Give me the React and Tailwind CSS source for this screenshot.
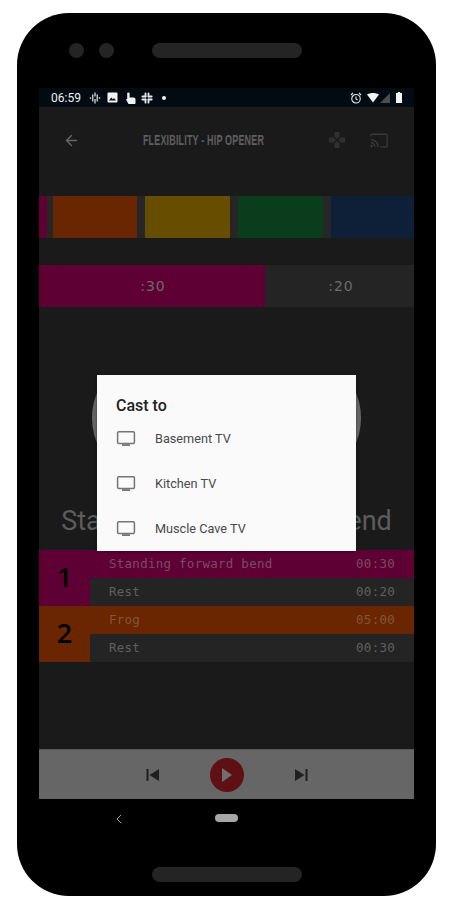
import { ArrowLeft } from "lucide-react";

const StatusIcons = () => (
  <div className="flex items-center">
    <svg width="12" height="12" viewBox="0 0 12 12" fill="#e8eaed" className="ml-[8px]">
      <rect x="5.4" y="0.5" width="1.2" height="4" />
      <rect x="5.4" y="7" width="1.2" height="4.500" />
      <rect x="3.2" y="2.500" width="1.2" height="7" />
      <rect x="7.6" y="2.500" width="1.2" height="7" />
      <rect x="0.8" y="5.300" width="1.400" height="1.400" />
      <rect x="9.8" y="5.300" width="1.400" height="1.400" />
    </svg>
    <svg width="11" height="11" viewBox="0 0 11 11" className="ml-[6px]">
      <rect x="0.5" y="0.5" width="10" height="10" rx="1" fill="#f1f3f4" />
      <path d="M2 8.500 4.200 5.500 5.800 7.300 7 6 9 8.500z" fill="#06101a" />
    </svg>
    <svg width="11" height="12" viewBox="0 0 11 12" fill="#f1f3f4" className="ml-[7px]">
      <rect x="2.200" y="0.500" width="2.400" height="7" rx="1.100" />
      <path d="M1 7.500 4.500 5.500h4a2 2 0 0 1 2 2V11a1 1 0 0 1-1 1H3.500z" />
    </svg>
    <svg width="12" height="12" viewBox="0 0 12 12" fill="#e8eaed" className="ml-[5px]">
      <rect x="0.500" y="3.600" width="5" height="1.800" rx="0.900" />
      <rect x="6.600" y="0.500" width="1.800" height="5" rx="0.900" />
      <rect x="6.600" y="3.600" width="5" height="1.800" rx="0.900" />
      <rect x="0.500" y="6.600" width="5" height="1.800" rx="0.900" />
      <rect x="3.600" y="6.600" width="1.800" height="5" rx="0.900" />
      <rect x="6.600" y="6.600" width="5" height="1.800" rx="0.900" />
      <rect x="3.600" y="0.500" width="1.800" height="5" rx="0.900" />
      <rect x="6.600" y="6.600" width="1.800" height="5" rx="0.900" />
    </svg>
    <span className="ml-[9px] h-[4px] w-[4px] rounded-full bg-[#f1f3f4]" />
  </div>
);

const TvIcon = () => (
  <svg width="20" height="18" viewBox="0 0 20 18" fill="none" className="shrink-0">
    <rect x="1.600" y="1.800" width="16.800" height="11.700" rx="1.200" stroke="#757575" strokeWidth="1.500" />
    <rect x="6" y="14.200" width="8" height="1.800" fill="#757575" />
  </svg>
);

const CastRow = ({ name }) => (
  <div className="flex h-[45px] items-center pl-[19px]">
    <TvIcon />
    <span className="ml-[19px] font-['Roboto',sans-serif] text-[12.7px] text-[#484848]">{name}</span>
  </div>
);

const WorkoutRow = ({ name, time, bg, color }) => (
  <div className={`flex h-[28px] items-center justify-between pl-[19px] pr-[19px] font-['DejaVu_Sans_Mono',monospace] text-[12.5px] tracking-[0.26px] ${bg} ${color}`}>
    <span>{name}</span>
    <span>{time}</span>
  </div>
);

const SetGroup = ({ num, bg, children }) => (
  <div className={`flex h-[56px] ${bg}`}>
    <div className="flex w-[51px] items-center justify-center pb-[1px] font-['Open_Sans',sans-serif] text-[27px] font-semibold text-black">{num}</div>
    <div className="flex-1">{children}</div>
  </div>
);

export default function App() {
  return (
    <div className="h-[914px] w-[453px] overflow-hidden bg-white pl-[17px] pt-[13px]">
      <div className="flex h-[883px] w-[419px] flex-col rounded-[52px] bg-black">
        {/* top bezel */}
        <div className="flex h-[75px] shrink-0 items-start pl-[52px] pt-[30px]">
          <span className="h-[15px] w-[15px] rounded-full bg-[#242424]" />
          <span className="ml-[15px] h-[15px] w-[15px] rounded-full bg-[#242424]" />
          <span className="ml-[38px] h-[15px] w-[150px] rounded-full bg-[#242424]" />
        </div>

        {/* screen */}
        <div className="relative mx-[22px] flex h-[711px] w-[375px] flex-col bg-[#1a1a1a]">
          <div className="flex h-[19px] shrink-0 items-center justify-between bg-[#020a12] pl-[12px] pr-[12px]">
            <div className="flex items-center">
              <span className="font-['Roboto',sans-serif] text-[12px] text-[#f1f3f4]">06:59</span>
              <StatusIcons />
            </div>
            <div className="flex items-center">
              <svg width="12" height="12" viewBox="0 0 24 24" fill="none" stroke="#e8eaed" strokeWidth="2.200">
                <circle cx="12" cy="13.500" r="8.500" />
                <path d="M12 9v5l3 2M2 6l4-4M22 6l-4-4" />
              </svg>
              <svg width="12" height="10" viewBox="0 0 12 10" className="ml-[5px]">
                <path d="M0 1.500C3.500-.5 8.500-.5 12 1.500L6 9.500z" fill="#f1f3f4" />
              </svg>
              <svg width="10" height="10" viewBox="0 0 10 10" className="ml-[1px]">
                <path d="M10 0V10H0z" fill="#4a4d50" />
              </svg>
              <svg width="6" height="11" viewBox="0 0 6 11" className="ml-[6px]">
                <path d="M1.800 0h2.400v1H6v10H0V1h1.800z" fill="#f1f3f4" />
              </svg>
            </div>
          </div>

          {/* app bar */}
          <div className="flex h-[66px] shrink-0 items-center pl-[24px] pr-[26px]">
            <ArrowLeft size={17} color="#666666" strokeWidth={2} />
            <div className="flex-1 text-center font-['Liberation_Sans',sans-serif] text-[15.5px] font-bold tracking-[0.3px] whitespace-nowrap text-[#5f5f5f]">
              <span className="inline-block scale-x-[0.58]">FLEXIBILITY - HIP OPENER</span>
            </div>
            <svg width="18" height="18" viewBox="0 0 18 18" fill="#303030" className="mr-[24px]">
              <path d="M9 8 6.500 5.500V1h5v4.500zM10 9l2.500-2.500H17v5h-4.500zM9 10l2.500 2.500V17h-5v-4.500zM8 9 5.500 11.500H1v-5h4.500z" />
            </svg>
            <svg width="18" height="15" viewBox="0 0 20 16" fill="none" stroke="#383838" strokeWidth="1.500">
              <path d="M1 3.500V2a1 1 0 0 1 1-1h16a1 1 0 0 1 1 1v12a1 1 0 0 1-1 1h-7" />
              <path d="M1 7a8 8 0 0 1 8 8M1 10.500a4.500 4.500 0 0 1 4.500 4.500" />
              <circle cx="1.800" cy="14.200" r="0.700" fill="#383838" />
            </svg>
          </div>

          {/* exercise colour strip */}
          <div className="mt-[23px] flex h-[42px] shrink-0 overflow-hidden bg-[#262626]">
            <div className="w-[8.300px] shrink-0 bg-[#5f0034]" />
            <div className="ml-[6px] w-[84px] shrink-0 bg-[#692600]" />
            <div className="ml-[8px] w-[84.700px] shrink-0 bg-[#664d00]" />
            <div className="ml-[8px] w-[84.700px] shrink-0 bg-[#0a3d1c]" />
            <div className="ml-[8px] w-[84.700px] shrink-0 bg-[#0d2038]" />
          </div>

          {/* interval bar */}
          <div className="mt-[27px] flex h-[42px] shrink-0 font-['DejaVu_Sans',sans-serif] text-[14px] tracking-[1px] text-[#6b6b6b]">
            <div className="flex w-[226px] items-center justify-center bg-[#5f0034] pl-[2px]">:30</div>
            <div className="flex flex-1 items-center justify-center bg-[#242424] pl-[3px]">:20</div>
          </div>

          {/* timer and exercise name sit behind the dialog */}
          <div className="mt-[68px] flex h-[86px] shrink-0 justify-center">
            <div className="h-[86px] w-[269px] rounded-[27px/43px] bg-[#666666]" />
          </div>

          <div className="mt-[45px] h-[30px] shrink-0 text-center font-['Roboto',sans-serif] text-[27px] leading-[30px] whitespace-nowrap text-[#5c5c5c] [word-spacing:29px]">
            Standing forward bend
          </div>

          <div className="mt-[14px] shrink-0">
            <SetGroup num="1" bg="bg-[#5f0034]">
              <WorkoutRow name="Standing forward bend" time="00:30" bg="bg-[#5f0034]" color="text-[#7c4a66]" />
              <WorkoutRow name="Rest" time="00:20" bg="bg-[#242424]" color="text-[#606060]" />
            </SetGroup>
            <SetGroup num="2" bg="bg-[#692600]">
              <WorkoutRow name="Frog" time="05:00" bg="bg-[#692600]" color="text-[#85553a]" />
              <WorkoutRow name="Rest" time="00:30" bg="bg-[#242424]" color="text-[#606060]" />
            </SetGroup>
          </div>

          {/* player controls */}
          <div className="mt-auto flex h-[50px] shrink-0 items-center justify-center border-t border-[#585858] bg-[#666666]">
            <svg width="14" height="14" viewBox="0 0 14 14" fill="#1f1f1f">
              <rect x="0.500" y="1" width="2" height="12" />
              <path d="M13 1v12L3.500 7z" />
            </svg>
            <div className="mx-[50px] flex h-[34px] w-[34px] items-center justify-center rounded-full bg-[#5e1014]">
              <svg width="12" height="14" viewBox="0 0 12 14" fill="#6f6f6f" className="ml-[1px]">
                <path d="M1 0 11 7 1 14z" />
              </svg>
            </div>
            <svg width="14" height="14" viewBox="0 0 14 14" fill="#1f1f1f">
              <rect x="11.500" y="1" width="2" height="12" />
              <path d="M1 1v12l9.500-6z" />
            </svg>
          </div>

          {/* cast dialog */}
          <div className="absolute left-[58px] top-[287px] h-[176px] w-[259px] bg-[#fafafa] shadow-[0_1px_3px_rgba(0,0,0,0.4)]">
            <div className="pl-[19px] pt-[21px] font-['Roboto',sans-serif] text-[16px] leading-[20px] font-medium text-[#212121]">Cast to</div>
            <div>
              <CastRow name="Basement TV" />
              <CastRow name="Kitchen TV" />
              <CastRow name="Muscle Cave TV" />
            </div>
          </div>
        </div>

        {/* bottom bezel */}
        <div className="relative flex-1">
          <svg width="8" height="10" viewBox="0 0 8 10" fill="none" stroke="#a0a0a0" strokeWidth="1" className="absolute left-[98px] top-[15px]">
            <path d="M6 1 2 5l4 4" />
          </svg>
          <span className="absolute left-[198px] top-[15px] h-[8px] w-[23px] rounded-full bg-[#a6a6a6]" />
          <span className="absolute bottom-[14px] left-[135px] h-[15px] w-[150px] rounded-full bg-[#242424]" />
        </div>
      </div>
    </div>
  );
}
